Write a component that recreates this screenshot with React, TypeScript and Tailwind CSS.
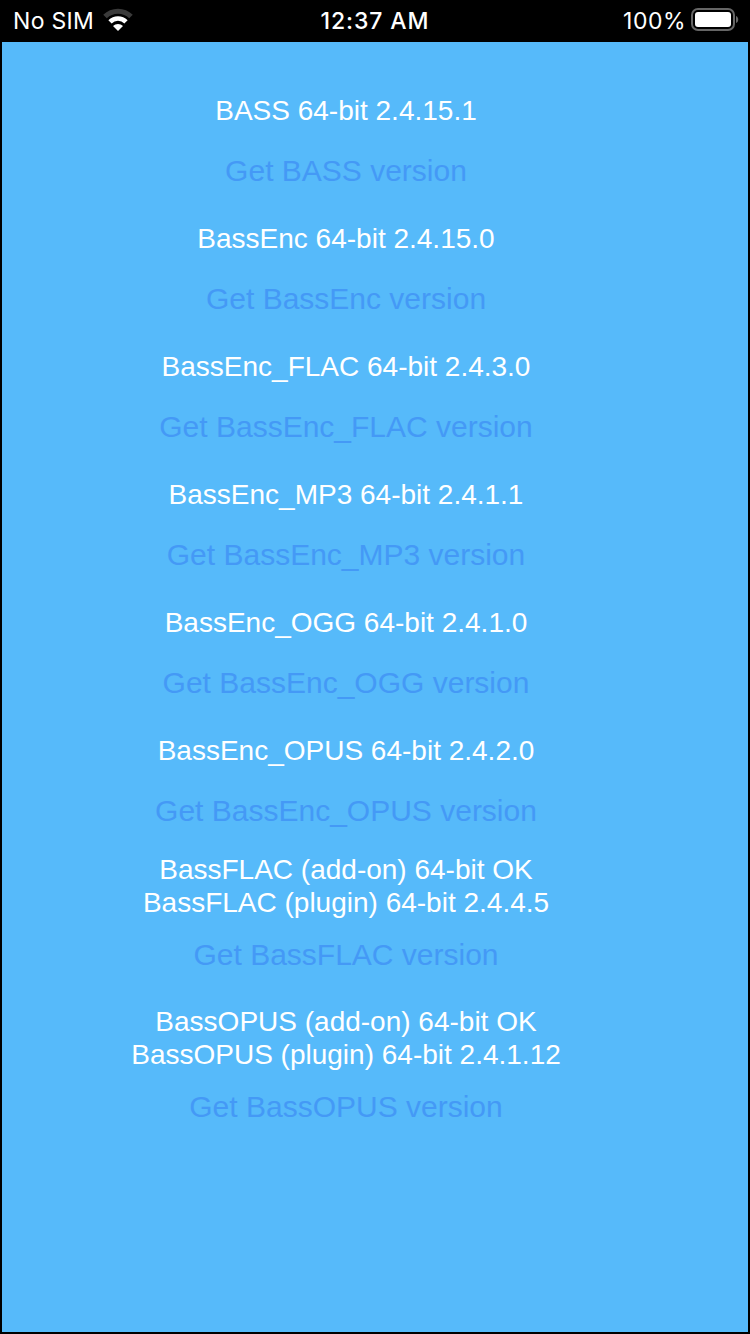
type Entry = { lines: string[]; action: string };

const entries: Entry[] = [
  { lines: ["BASS 64-bit 2.4.15.1"], action: "Get BASS version" },
  { lines: ["BassEnc 64-bit 2.4.15.0"], action: "Get BassEnc version" },
  { lines: ["BassEnc_FLAC 64-bit 2.4.3.0"], action: "Get BassEnc_FLAC version" },
  { lines: ["BassEnc_MP3 64-bit 2.4.1.1"], action: "Get BassEnc_MP3 version" },
  { lines: ["BassEnc_OGG 64-bit 2.4.1.0"], action: "Get BassEnc_OGG version" },
  { lines: ["BassEnc_OPUS 64-bit 2.4.2.0"], action: "Get BassEnc_OPUS version" },
  {
    lines: ["BassFLAC (add-on) 64-bit OK", "BassFLAC (plugin) 64-bit 2.4.4.5"],
    action: "Get BassFLAC version",
  },
  {
    lines: ["BassOPUS (add-on) 64-bit OK", "BassOPUS (plugin) 64-bit 2.4.1.12"],
    action: "Get BassOPUS version",
  },
];

function WifiIcon() {
  return (
    <svg width="30" height="24" viewBox="0 0 30 24" fill="none">
      <path d="M2 8.6A18.4 18.4 0 0 1 28 8.6" stroke="#3a3a3a" strokeWidth="5" />
      <path d="M7 13.8A11.3 11.3 0 0 1 23 13.8" stroke="#fff" strokeWidth="4.6" />
      <path d="M15 23 10 18A7.1 7.1 0 0 1 20 18Z" fill="#fff" />
    </svg>
  );
}

function BatteryIcon() {
  return (
    <svg width="50" height="24" viewBox="0 0 50 24" fill="none">
      <rect x="2" y="1" width="42" height="21" rx="6" stroke="#666" strokeWidth="2" />
      <rect x="5" y="4" width="36" height="15" rx="3" fill="#fff" />
      <path d="M46 8c3 1 3 6 0 7z" fill="#666" />
    </svg>
  );
}

function StatusBar() {
  return (
    <header className="grid h-[42px] grid-cols-[1fr_auto_1fr] items-center pb-[2px] font-['Inter',sans-serif] text-[23px] text-white">
      <div className="flex items-center gap-[9px] pl-[13px]">
        <span className="pt-[2px] tracking-[0.3px]">No SIM</span>
        <WifiIcon />
      </div>
      <span className="pt-[2px] font-[550] tracking-[0.9px]">12:37 AM</span>
      <div className="flex items-center justify-end gap-1 pr-[10px]">
        <span className="pt-[2px] tracking-[0.5px]">100%</span>
        <BatteryIcon />
      </div>
    </header>
  );
}

export default function App() {
  return (
    <div className="flex h-[1334px] w-[750px] flex-col bg-black">
      <StatusBar />
      <main className="mx-[2px] mb-[2px] flex-1 bg-[#56bafa] pt-[36px] pr-[58px] font-['Liberation_Sans',Arial,sans-serif]">
        {entries.map((e) => {
          const double = e.lines.length > 1;
          return (
            <section key={e.action} className={double ? "mb-[14px]" : "mb-[6px]"}>
              <div
                className={
                  "flex flex-col items-center justify-center text-[28px] leading-[33px] whitespace-nowrap text-white " +
                  (double ? "h-[80px]" : "h-[64px]")
                }
              >
                {e.lines.map((l) => (
                  <p key={l}>{l}</p>
                ))}
              </div>
              <button className="block h-[58px] w-full text-center text-[30px] leading-[58px] whitespace-nowrap text-[#4499f6]">
                {e.action}
              </button>
            </section>
          );
        })}
      </main>
    </div>
  );
}
